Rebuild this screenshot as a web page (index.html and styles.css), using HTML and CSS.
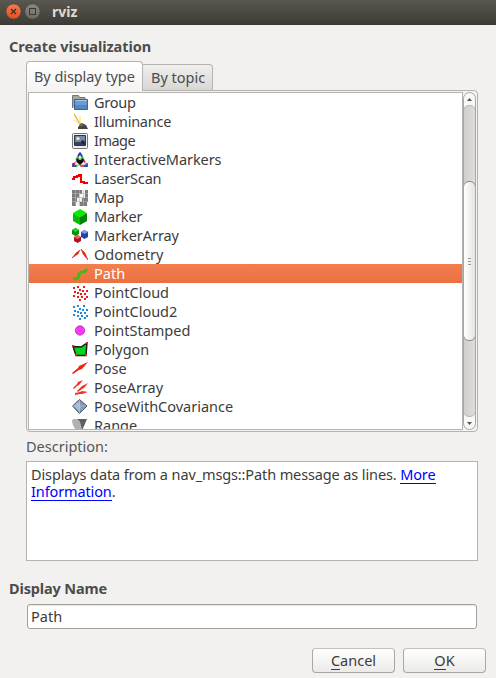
FILE: index.html
```html
<!DOCTYPE html>
<html lang="en">
<head>
<meta charset="utf-8">
<title>rviz</title>
<link rel="stylesheet" href="styles.css">
</head>
<body>
<div class="window">
  <header class="titlebar">
    <svg class="controls" width="44" height="25" viewBox="0 0 44 25">
      <defs>
        <linearGradient id="close" x1="0" y1="0" x2="0" y2="1"><stop offset="0" stop-color="#f37c55"/><stop offset="1" stop-color="#df4d1e"/></linearGradient>
        <linearGradient id="max" x1="0" y1="0" x2="0" y2="1"><stop offset="0" stop-color="#8b897f"/><stop offset="1" stop-color="#6c6a63"/></linearGradient>
      </defs>
      <circle cx="13.5" cy="11.5" r="7.7" fill="url(#close)" stroke="#45403a" stroke-width=".8"/>
      <path d="M11 9l5 5M16 9l-5 5" stroke="#4a2a1c" stroke-width="1.2"/>
      <circle cx="32.5" cy="11.5" r="7.7" fill="url(#max)" stroke="#45433e" stroke-width=".8"/>
      <rect x="29.5" y="8.5" width="6" height="6" fill="none" stroke="#3a3935"/>
    </svg>
    <span class="title">rviz</span>
  </header>
  <main class="dialog">
    <h2 class="heading create">Create visualization</h2>
    <div class="tabs">
      <div class="tab active">By display type</div>
      <div class="tab topic">By topic</div>
    </div>
    <section class="pane">
      <ul class="list">
        <li class="tighter"><svg viewBox="0 0 16 16"><path d="M.5 13V.5h6l1 2h5.500v3" fill="#a5a5a5" stroke="#777"/><path d="M2.500 14.500v-10h13v10z" fill="#6b9bd0" stroke="#376396"/><path d="M3.500 5.500h11" stroke="#a7c8eb"/><path d="M3 10h12v4H3z" fill="#5488c3"/></svg>Group</li>
        <li class="tighter"><svg viewBox="0 0 16 16"><path d="M2 0l6 10" stroke="#e2ae12" stroke-width="1.200"/><path d="M2 6l6 4V2" fill="none" stroke="#f7e244" stroke-width="1"/><path d="M6 13l4-4 4 2 2 4H6z" fill="#444"/><path d="M7 11l2-2 3 2-3 2z" fill="#6b6652"/></svg>Illuminance</li>
        <li class="tightest"><svg viewBox="0 0 16 16"><rect x=".5" y=".5" width="15" height="15" rx="1" fill="#eee" stroke="#777"/><path d="M2.500 2.500h11v10h-11z" fill="#7189ab" stroke="#29374e"/><path d="M3 9h10v3H3z" fill="#34445f"/><path d="M9 8l2-1 2 2v3l-4-2z" fill="#202a3a"/><circle cx="6" cy="5.500" r="1.600" fill="#f1efad"/></svg>Image</li>
        <li class="snug"><svg viewBox="0 0 16 16"><path d="M8 2L2 13h12z" fill="#fff" stroke="#555" stroke-width=".6"/><path d="M8 1L1 14h14z" fill="none" stroke="#e32020" stroke-width="1.500" stroke-dasharray="4 7"/><path d="M8 1L1 14h14z" fill="none" stroke="#18c52b" stroke-width="2" stroke-dasharray="4 7" stroke-dashoffset="7"/><path d="M6 4l2-3 2 3M1 11v3h3M12 14h3v-3" fill="none" stroke="#2929ef" stroke-width="1.500"/><path d="M4.500 7L8 6l3.500 1v3L8 13l-3.500-3z" fill="#111"/><path d="M6 7l2-1 2 1-2 1z" fill="#ddd"/></svg>InteractiveMarkers</li>
        <li class="tight"><svg viewBox="0 0 16 16"><path d="M0 8h2V6h3V5h2V4h2v7h3v1h4" fill="none" stroke="#f20000" stroke-width="2"/></svg>LaserScan</li>
        <li class="tight"><svg viewBox="0 0 16 16"><path d="M0 0h16v16H0z" fill="#f4f4f4"/><path d="M0 0h10v4H7v4H5v4H4v4H0zM13 0h3v12h-1v4H8v-4h2V8h3z" fill="#7c7c7c"/><path d="M3.500 0v16M7.500 0v16M11.500 0v16M0 3.500h16M0 7.500h16M0 11.500h16" stroke="#b6b6b6" stroke-width=".6"/></svg>Map</li>
        <li class="tight"><svg viewBox="0 0 16 16"><path d="M8 0l7 4-7 4-7-4z" fill="#00ed00"/><path d="M1 4l7 4v8l-7-4z" fill="#00be00"/><path d="M15 4L8 8v8l7-4z" fill="#008300"/></svg>Marker</li>
        <li class="snug"><svg viewBox="0 0 16 16"><path d="M0 2l3.500-2L7 2v4L3.500 8 0 6z" fill="#008d0c"/><path d="M0 2l3.500-2L7 2 3.500 4z" fill="#14dc2b"/><path d="M9 4l3.500-2L16 4v5l-3.500 2L9 9z" fill="#2045a8"/><path d="M9 4l3.500-2L16 4l-3.500 2z" fill="#7a9cf3"/><path d="M2 9l3.500-2L9 9v4l-3.500 2L2 13z" fill="#a5161d"/><path d="M2 9l3.500-2L9 9l-3.500 2z" fill="#ee6468"/></svg>MarkerArray</li>
        <li class=""><svg viewBox="0 0 16 16"><path d="M0 11l4-5 4-3-2 4zM9 2l4 4 3 7-5-6z" fill="#f22008" stroke="#d51b0a" stroke-width=".5"/></svg>Odometry</li>
        <li class="selected"><svg viewBox="0 0 16 16"><path d="M1 13c4 0 6-1 6-4 0-2 2-3 4-3 2 0 3-1 4-3" fill="none" stroke="#4bb51d" stroke-width="3"/></svg>Path</li>
        <li><svg class="cloud red" viewBox="0 0 16 16"><path d="M1 2h2v2H1zM5 1h2v2H5zM7 4h2v2H7zM11 1h2v2h-2zM2 6h2v2H2zM10 5h2v2h-2zM14 5h2v2h-2zM5 7h2v2H5zM8 8h2v2H8zM12 8h2v2h-2zM1 10h2v2H1zM14 11h2v2h-2zM5 11h2v2H5zM9 11h2v2H9zM7 14h2v2H7zM12 13h2v2h-2z"/></svg>PointCloud</li>
        <li><svg class="cloud blue" viewBox="0 0 16 16"><path d="M1 2h2v2H1zM5 1h2v2H5zM7 4h2v2H7zM11 1h2v2h-2zM2 6h2v2H2zM10 5h2v2h-2zM14 5h2v2h-2zM5 7h2v2H5zM8 8h2v2H8zM12 8h2v2h-2zM1 10h2v2H1zM14 11h2v2h-2zM5 11h2v2H5zM9 11h2v2H9zM7 14h2v2H7zM12 13h2v2h-2z"/></svg>PointCloud2</li>
        <li><svg viewBox="0 0 16 16"><circle cx="8" cy="7.500" r="4.700" fill="#f53bf0" stroke="#ba31b7" stroke-width=".8"/></svg>PointStamped</li>
        <li><svg viewBox="0 0 16 16"><path d="M1 4.500l8 .5 6-4-1 12.500H4z" fill="#00d51b" stroke="#151515" stroke-width="1.400"/><path d="M0 3h2v2H0zM14 0h2v2h-2zM13 12h2v2h-2zM3 12h2v2H3z" fill="#e22"/></svg>Polygon</li>
        <li><svg viewBox="0 0 16 16"><path d="M0 12l6-5 1-2 9-4-6 7-3 1-6 4z" fill="#ee260e"/></svg>Pose</li>
        <li><svg viewBox="0 0 16 16"><path d="M1 8l4-4 1-2 5-2-4 5-2 1-3 3zM5 11l4-4 1-1 6-3-4 5-2 1-4 3zM3 13l5-1 2-1 6 1-6 2-2 0-5 1z" fill="#ee3320"/></svg>PoseArray</li>
        <li><svg viewBox="0 0 16 16"><path d="M.5 7L7.500.5 15 7l-7.500 7.500z" fill="#8395b1" stroke="#49566e"/><path d="M2 7l5.500-5v11z" fill="#abb9cf"/><path d="M7.500 1v13M1 7h13M4 4l7 7" stroke="#bac6d7" stroke-width=".7"/></svg>PoseWithCovariance</li>
        <li><svg viewBox="0 0 16 16"><path d="M5 1h10L9 15z" fill="#5e5e5e"/><path d="M0 2c3-2 7-1 8 2s3 8 1 11C5 15 0 8 0 2z" fill="#b1b1b1"/></svg>Range</li>
      </ul>
      <div class="scrollbar">
        <div class="step up"><svg viewBox="0 0 5 3"><path d="M0 3l2.500-3L5 3z"/></svg></div>
        <div class="trough"><div class="thumb"><i></i><i></i><i></i></div></div>
        <div class="step down"><svg viewBox="0 0 5 3"><path d="M0 0h5L2.500 3z"/></svg></div>
      </div>
    </section>
    <div class="label">Description:</div>
    <div class="description"><div class="line">Displays data from a nav_msgs::Path message as lines. <a>More</a></div><div class="line"><a>Information</a>.</div></div>
    <h2 class="heading name">Display Name</h2>
    <div class="field">Path</div>
    <footer class="actions"><div class="button cancel"><span><u>C</u>ancel</span></div><div class="button ok"><span><u>O</u>K</span></div></footer>
  </main>
</div>
</body>
</html>
```
FILE: styles.css
```css
* { box-sizing: border-box; }
body { margin: 0; font: 14.5px/19px "Noto Sans", sans-serif; color: #3c3c3c; background: #f2f1f0; overflow: hidden; }
.window { width: 496px; height: 678px; }
.titlebar { height: 25px; display: flex; background: linear-gradient(#59574f, #3d3c37); border-bottom: 1px solid #393834; }
.title { padding-left: 8px; line-height: 24px; font-weight: 700; font-size: 14px; color: #dfdbd2; }
.dialog { padding: 12px 10px 0 9px; }
.heading { margin: 0; height: 20px; font-size: 14.5px; line-height: 18px; font-weight: 700; color: #4c4c4c; letter-spacing: -.05px; }
.tabs { display: flex; align-items: flex-end; height: 34px; margin: 0 0 -1px 17px; position: relative; }
.tab { height: 26px; width: 70px; border: 1px solid #b6b3ae; border-left: 0; border-bottom: 0; border-radius: 0 4px 0 0; line-height: 25px; padding-left: 8px; background: linear-gradient(#f0efee, #d9d7d5); margin-bottom: 1px; white-space: nowrap; color: #4c4c4c; }
.tab.active { width: 117px; height: 30px; line-height: 29px; padding-left: 7px; border-left: 1px solid #b6b3ae; border-radius: 4px 4px 0 0; background: linear-gradient(#fff, #f5f4f3); margin-bottom: 0; letter-spacing: -.07px; }
.pane { margin-left: 17px; width: 452px; height: 342px; border: 1px solid #b6b3ae; border-radius: 0 4px 4px 4px; padding: 1px; display: flex; background: #f4f3f2; }
.list { margin: 0; padding: 0; width: 435px; height: 338px; list-style: none; overflow: hidden; border: 1px solid #b6b3ae; background: #fff; }
.list li { height: 19px; padding-left: 43px; display: flex; align-items: center; gap: 6px; white-space: nowrap; }
.list svg { width: 16px; height: 16px; flex: none; }
.list .snug { letter-spacing: -.07px; }
.list .tight { letter-spacing: -.16px; }
.list .tighter { letter-spacing: -.25px; }
.list .tightest { letter-spacing: -.5px; }
.list .selected { color: #fff; background: linear-gradient(#f37f4f, #eb7040); }
.red { fill: #ef1919; }
.blue { fill: #2189e5; }
.scrollbar { width: 13px; height: 338px; display: flex; flex-direction: column; border: 1px solid #aaa7a2; border-radius: 7px; background: #f8f8f7; overflow: hidden; }
.step { height: 12px; display: flex; align-items: center; justify-content: center; }
.step svg { width: 5px; height: 3px; fill: #555; }
.trough { height: 312px; margin: 0 -1px; padding-top: 75px; border: 1px solid #b9b6b2; border-radius: 6px; background: linear-gradient(90deg, #d1cfcc, #dfdddb); }
.thumb { height: 160px; margin: 0 -1px; border: 1px solid #8d8b87; border-radius: 6px; background: linear-gradient(90deg, #fff, #e5e4e2); display: flex; flex-direction: column; justify-content: center; align-items: center; gap: 2px; }
.thumb i { width: 3px; height: 1px; background: #999; }
.label { margin: 5px 0 0 17px; height: 20px; line-height: 18px; color: #565656; }
.description { margin: 4px 0 0 17px; width: 452px; height: 100px; border: 1px solid #b6b3ae; background: #fff; padding: 5px 4px; white-space: nowrap; letter-spacing: -.12px; }
.line { height: 17px; line-height: 15px; }
.description a { color: #00f; border-bottom: 1px solid #00f; display: inline-block; height: 17px; line-height: 15px; vertical-align: top; }
.name { margin-top: 18px; letter-spacing: -.15px; }
.field { margin: 5px 0 0 18px; width: 450px; height: 25px; border: 1px solid #a4a19d; border-radius: 3px; background: #fff; padding-left: 3px; line-height: 23px; box-shadow: inset 0 1px 1px #e5e4e2; }
.actions { display: flex; justify-content: flex-end; gap: 8px; margin-top: 19px; }
.button { width: 83px; height: 25px; border: 1px solid #aaa7a3; border-top-color: #c4c1be; border-radius: 4px; background: linear-gradient(#fff, #ebeae8); text-align: center; line-height: 23px; }
.button u { text-decoration: none; display: inline-block; height: 21px; border-bottom: 1px solid #3c3c3c; line-height: 23px; vertical-align: top; }
```
